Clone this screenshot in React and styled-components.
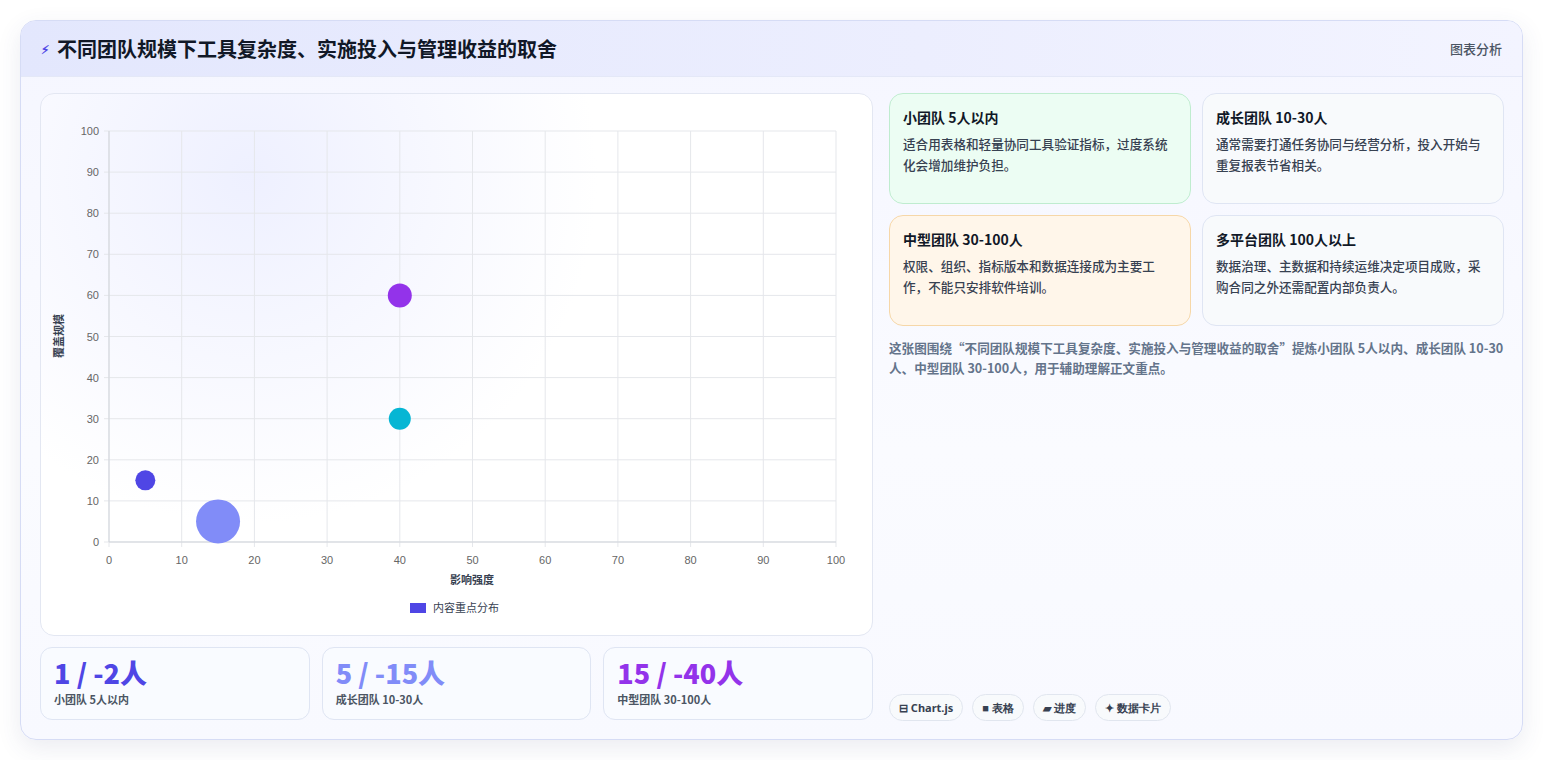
import React from "react";
import styled, { createGlobalStyle } from "styled-components";

const G = createGlobalStyle`
  body{margin:0;background:#fff;font-family:"Noto Sans CJK SC","Noto Sans",sans-serif;}
`;
const Page = styled.div`padding:20px 20px 20px 20px;width:1543px;box-sizing:border-box;`;
const Card = styled.div`
  width:1503px;height:720px;box-sizing:border-box;border:1px solid #d6dcf5;border-radius:16px;overflow:hidden;
  background:linear-gradient(180deg,#f5f6ff 0%,#fafbff 60%,#f8f9ff 100%);
  box-shadow:0 8px 24px rgba(60,70,120,0.10);display:flex;flex-direction:column;
`;
const Header = styled.div`
  height:55px;flex:none;display:flex;align-items:center;justify-content:space-between;padding:0 20px;
  background:linear-gradient(90deg,#e3e7fd,#eceefe 60%,#f3f4ff);border-bottom:1px solid #e4e8f7;
`;
const Title = styled.h1`margin:0;font-size:20px;font-weight:700;color:#111827;display:flex;align-items:center;gap:8px;`;
const Bolt = styled.span`color:#4f46e5;font-size:12px;`;
const HTag = styled.span`font-size:13px;color:#4b5563;font-weight:500;`;
const Body = styled.div`flex:1;display:grid;grid-template-columns:833px 615px;gap:16px;padding:16px 19px 18px 19px;`;
const Left = styled.div`display:flex;flex-direction:column;gap:11px;`;
const ChartBox = styled.div`height:543px;box-sizing:border-box;border:1px solid #e3e7f2;border-radius:14px;background:radial-gradient(circle at 25% 15%,#eef0ff 0%,#fff 45%);`;
const Stats = styled.div`display:grid;grid-template-columns:repeat(3,1fr);gap:12px;`;
const Stat = styled.div`height:73px;box-sizing:border-box;border:1px solid #dfe5f3;border-radius:12px;background:#f9fbff;padding:9px 13px;`;
const Big = styled.div`font-size:27px;font-weight:800;color:${p=>p.c};line-height:32px;font-family:"Noto Sans CJK SC",sans-serif;`;
const Small = styled.div`font-size:11px;color:#4b5563;margin-top:2px;font-weight:600;`;
const Right = styled.div`display:flex;flex-direction:column;`;
const Grid = styled.div`display:grid;grid-template-columns:1fr 1fr;gap:11px;`;
const Info = styled.div`height:111px;box-sizing:border-box;border:1px solid ${p=>p.b};background:${p=>p.bg};border-radius:14px;padding:13px 13px;`;
const IT = styled.div`font-size:14px;font-weight:700;color:#111827;margin-bottom:6px;`;
const ID = styled.div`font-size:12.6px;color:#374151;line-height:21px;font-weight:500;`;
const Desc = styled.p`margin:12px 0 0;font-size:12.6px;line-height:20px;color:#64748b;font-weight:600;`;
const Tags = styled.div`margin-top:auto;display:flex;gap:9px;`;
const Tag = styled.span`height:27px;box-sizing:border-box;border:1px solid #e1e6ef;border-radius:14px;background:#f8fafc;padding:0 9px;display:flex;align-items:center;font-size:11px;font-weight:700;color:#374151;font-family:"Noto Sans",sans-serif;gap:4px;`;

const X0=68,X1=795,Y0=448,Y1=37;
const sx=v=>X0+(X1-X0)*v/100, sy=v=>Y0-(Y0-Y1)*v/100;
const ticks=[0,10,20,30,40,50,60,70,80,90,100];
function Chart(){
  return (
    <svg width="831" height="541" fontFamily="Liberation Sans, sans-serif">
      {ticks.map(t=>(<g key={t}>
        <line x1={sx(t)} x2={sx(t)} y1={Y1} y2={Y0+5} stroke="#e5e7eb"/>
        <line x1={X0-5} x2={X1} y1={sy(t)} y2={sy(t)} stroke="#e5e7eb"/>
        <text x={sx(t)} y={Y0+22} fontSize="11" fill="#666" textAnchor="middle">{t}</text>
        <text x={X0-10} y={sy(t)+4} fontSize="11" fill="#666" textAnchor="end">{t}</text>
      </g>))}
      <line x1={X0} x2={X0} y1={Y1} y2={Y0} stroke="#d1d5db"/>
      <line x1={X0} x2={X1} y1={Y0} y2={Y0} stroke="#d1d5db"/>
      <text x="22" y="242" fontSize="11" fontWeight="700" fill="#374151" transform="rotate(-90 22 242)" textAnchor="middle" fontFamily="Noto Sans CJK SC">覆盖规模</text>
      <text x="431" y="490" fontSize="11" fontWeight="700" fill="#374151" textAnchor="middle" fontFamily="Noto Sans CJK SC">影响强度</text>
      <circle cx={sx(40)} cy={sy(60)} r="12" fill="#9333ea"/>
      <circle cx={sx(40)} cy={sy(30)} r="11" fill="#06b6d4"/>
      <circle cx={sx(5)} cy={sy(15)} r="10" fill="#4f46e5"/>
      <circle cx={sx(15)} cy={sy(5)} r="22" fill="#818cf8"/>
      <rect x="369" y="509" width="16" height="10" fill="#4f46e5"/>
      <text x="392" y="518" fontSize="11" fill="#374151" fontFamily="Noto Sans CJK SC">内容重点分布</text>
    </svg>
  );
}

export default function App(){
  return (<Page><G/><Card>
    <Header><Title><Bolt>⚡︎</Bolt>不同团队规模下工具复杂度、实施投入与管理收益的取舍</Title><HTag>图表分析</HTag></Header>
    <Body>
      <Left>
        <ChartBox><Chart/></ChartBox>
        <Stats>
          <Stat><Big c="#4f46e5">1 / -2人</Big><Small>小团队 5人以内</Small></Stat>
          <Stat><Big c="#818cf8">5 / -15人</Big><Small>成长团队 10-30人</Small></Stat>
          <Stat><Big c="#9333ea">15 / -40人</Big><Small>中型团队 30-100人</Small></Stat>
        </Stats>
      </Left>
      <Right>
        <Grid>
          <Info b="#bfeccf" bg="#ecfdf3"><IT>小团队 5人以内</IT><ID>适合用表格和轻量协同工具验证指标，过度系统化会增加维护负担。</ID></Info>
          <Info b="#dfe5f3" bg="#f8fafc"><IT>成长团队 10-30人</IT><ID>通常需要打通任务协同与经营分析，投入开始与重复报表节省相关。</ID></Info>
          <Info b="#f6d7a8" bg="#fff6ea"><IT>中型团队 30-100人</IT><ID>权限、组织、指标版本和数据连接成为主要工作，不能只安排软件培训。</ID></Info>
          <Info b="#dfe5f3" bg="#f8fafc"><IT>多平台团队 100人以上</IT><ID>数据治理、主数据和持续运维决定项目成败，采购合同之外还需配置内部负责人。</ID></Info>
        </Grid>
        <Desc>这张图围绕“不同团队规模下工具复杂度、实施投入与管理收益的取舍”提炼小团队 5人以内、成长团队 10-30人、中型团队 30-100人，用于辅助理解正文重点。</Desc>
        <Tags><Tag>⊟ Chart.js</Tag><Tag>■ 表格</Tag><Tag>▰ 进度</Tag><Tag>✦ 数据卡片</Tag></Tags>
      </Right>
    </Body>
  </Card></Page>);
}
